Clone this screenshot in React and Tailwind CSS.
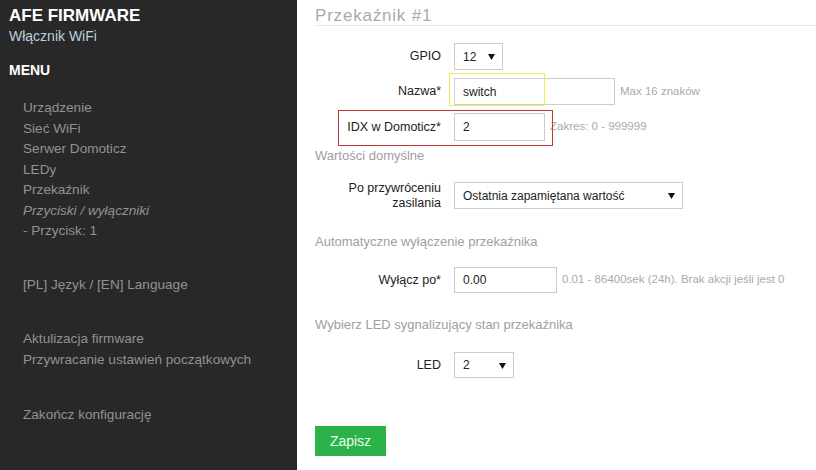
const font = { fontFamily: '"Liberation Sans", Arial, sans-serif' };

function Arrow() {
  return (
    <svg width="7" height="7" viewBox="0 0 7 7" className="shrink-0">
      <path d="M0 1 L7 1 L3.5 7 Z" fill="#111" />
    </svg>
  );
}

function Select({ value, width }) {
  return (
    <div className={`flex items-center justify-between h-full border border-[#cccccc] bg-white pl-[8px] pr-[7px] text-[12px] text-[#222] ${width}`}>
      <span>{value}</span>
      <Arrow />
    </div>
  );
}

function Input({ value, width }) {
  return (
    <div className={`flex items-center h-full border border-[#cccccc] bg-white pl-[8px] text-[12px] text-[#222] ${width}`}>
      {value}
    </div>
  );
}

function Row({ label, children, help, className = "" }) {
  return (
    <div className={`flex items-center ${className}`}>
      <div className="w-[126px] shrink-0 text-right text-[12.5px] leading-[15px] text-[#222]">{label}</div>
      <div className="ml-[13px] h-full flex">{children}</div>
      {help && <div className="ml-[5px] text-[11.5px] text-[#aaaaaa]">{help}</div>}
    </div>
  );
}

function SideLink({ children, italic }) {
  return <div className={italic ? "italic" : ""}>{children}</div>;
}

export default function App() {
  return (
    <div className="flex w-[816px] h-[470px] overflow-hidden bg-white" style={font}>
      <aside className="w-[297px] shrink-0 bg-[#282828] pt-[6px] pl-[9px]">
        <div className="text-[17px] leading-[20px] font-bold text-white">AFE FIRMWARE</div>
        <div className="text-[14px] leading-[20px] text-[#bdd0dd]">Włącznik WiFi</div>
        <div className="mt-[14px] text-[14px] leading-[20px] font-bold text-white">MENU</div>
        <div className="mt-[18px] pl-[14px] text-[13.6px] leading-[20.5px] text-[#929292]">
          <SideLink>Urządzenie</SideLink>
          <SideLink>Sieć WiFi</SideLink>
          <SideLink>Serwer Domoticz</SideLink>
          <SideLink>LEDy</SideLink>
          <SideLink>Przekaźnik</SideLink>
          <SideLink italic>Przyciski / wyłączniki</SideLink>
          <SideLink>- Przycisk: 1</SideLink>
          <div className="mt-[33px]">[PL] Język / [EN] Language</div>
          <div className="mt-[34px]">Aktulizacja firmware</div>
          <div>Przywracanie ustawień początkowych</div>
          <div className="mt-[35px]">Zakończ konfigurację</div>
        </div>
      </aside>

      <main className="relative flex-1 pl-[18px]">
        <div className="pt-[6px] text-[17px] leading-[19px] tracking-[0.8px] text-[#aaaaaa] border-b border-[#e6e6e6]">Przekaźnik #1</div>

        <Row label="GPIO" className="mt-[17px] h-[27px]">
          <Select value="12" width="w-[49px]" />
        </Row>
        <Row label="Nazwa*" className="mt-[8px] h-[27px]" help="Max 16 znaków">
          <Input value="switch" width="w-[161px]" />
        </Row>
        <Row label="IDX w Domoticz*" className="mt-[8px] h-[28px]" help="Zakres: 0 - 999999">
          <Input value="2" width="w-[91px]" />
        </Row>

        <div className="mt-[7px] text-[13px] leading-[16px] text-[#a0a0a0]">Wartości domyślne</div>
        <Row label={<>Po przywróceniu<br />zasilania</>} className="mt-[18px] h-[27px]">
          <Select value="Ostatnia zapamiętana wartość" width="w-[229px]" />
        </Row>

        <div className="mt-[25px] text-[13px] leading-[16px] text-[#a0a0a0]">Automatyczne wyłączenie przekaźnika</div>
        <Row label="Wyłącz po*" className="mt-[17px] h-[26px]" help="0.01 - 86400sek (24h). Brak akcji jeśli jest 0">
          <Input value="0.00" width="w-[103px]" />
        </Row>

        <div className="mt-[24px] text-[13px] leading-[16px] text-[#a0a0a0]">Wybierz LED sygnalizujący stan przekaźnika</div>
        <Row label="LED" className="mt-[19px] h-[26px]">
          <Select value="2" width="w-[60px]" />
        </Row>

        <button className="mt-[48px] w-[71px] h-[30px] bg-[#2db24a] text-[14px] text-[#eaffea]">Zapisz</button>

        <div className="absolute left-[152px] top-[73px] w-[96px] h-[33px] border border-[#f2ea55]" />
        <div className="absolute left-[41px] top-[110px] w-[215px] h-[36px] border border-[#c2373c]" />
      </main>
    </div>
  );
}
